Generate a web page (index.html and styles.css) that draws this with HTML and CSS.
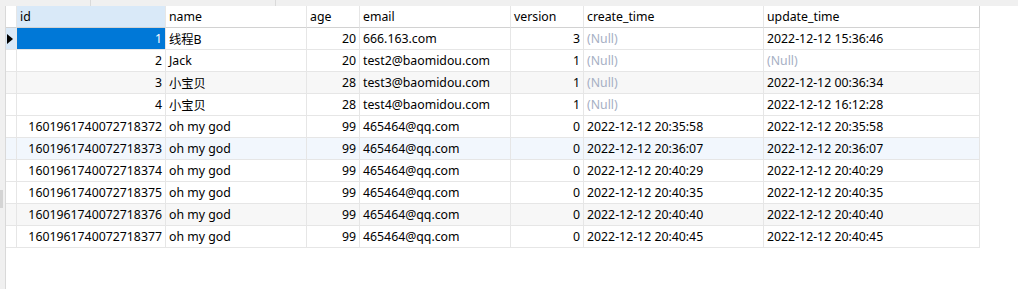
FILE: index.html
```html
<!DOCTYPE html>
<html lang="en">
  <head>
    <meta charset="UTF-8" />
    <title>user</title>
    <link rel="stylesheet" href="styles.css">
  </head>
  <body>
    <div class="toolbar">
      <div class="seg seg-a"></div>
      <div class="seg seg-b"></div>
    </div>

    <div class="main">
      <div class="gutter"><div class="grip"></div></div>

      <div class="grid">
        <div class="row head">
          <div class="c ind"></div>
          <div class="c sel-col">id</div>
          <div class="c">name</div>
          <div class="c">age</div>
          <div class="c">email</div>
          <div class="c">version</div>
          <div class="c">create_time</div>
          <div class="c">update_time</div>
        </div>

        <div class="row current">
          <div class="c ind"><span class="arrow"></span></div>
          <div class="c num selected">1</div>
          <div class="c">线程B</div>
          <div class="c num">20</div>
          <div class="c">666.163.com</div>
          <div class="c num">3</div>
          <div class="c null">(Null)</div>
          <div class="c">2022-12-12 15:36:46</div>
        </div>
        <div class="row">
          <div class="c ind"></div>
          <div class="c num">2</div>
          <div class="c">Jack</div>
          <div class="c num">20</div>
          <div class="c">test2@baomidou.com</div>
          <div class="c num">1</div>
          <div class="c null">(Null)</div>
          <div class="c null">(Null)</div>
        </div>
        <div class="row alt">
          <div class="c ind"></div>
          <div class="c num">3</div>
          <div class="c">小宝贝</div>
          <div class="c num">28</div>
          <div class="c">test3@baomidou.com</div>
          <div class="c num">1</div>
          <div class="c null">(Null)</div>
          <div class="c">2022-12-12 00:36:34</div>
        </div>
        <div class="row">
          <div class="c ind"></div>
          <div class="c num">4</div>
          <div class="c">小宝贝</div>
          <div class="c num">28</div>
          <div class="c">test4@baomidou.com</div>
          <div class="c num">1</div>
          <div class="c null">(Null)</div>
          <div class="c">2022-12-12 16:12:28</div>
        </div>
        <div class="row">
          <div class="c ind"></div>
          <div class="c num">1601961740072718372</div>
          <div class="c">oh my god</div>
          <div class="c num">99</div>
          <div class="c">465464@qq.com</div>
          <div class="c num">0</div>
          <div class="c">2022-12-12 20:35:58</div>
          <div class="c">2022-12-12 20:35:58</div>
        </div>
        <div class="row hover">
          <div class="c ind"></div>
          <div class="c num">1601961740072718373</div>
          <div class="c">oh my god</div>
          <div class="c num">99</div>
          <div class="c">465464@qq.com</div>
          <div class="c num">0</div>
          <div class="c">2022-12-12 20:36:07</div>
          <div class="c">2022-12-12 20:36:07</div>
        </div>
        <div class="row">
          <div class="c ind"></div>
          <div class="c num">1601961740072718374</div>
          <div class="c">oh my god</div>
          <div class="c num">99</div>
          <div class="c">465464@qq.com</div>
          <div class="c num">0</div>
          <div class="c">2022-12-12 20:40:29</div>
          <div class="c">2022-12-12 20:40:29</div>
        </div>
        <div class="row">
          <div class="c ind"></div>
          <div class="c num">1601961740072718375</div>
          <div class="c">oh my god</div>
          <div class="c num">99</div>
          <div class="c">465464@qq.com</div>
          <div class="c num">0</div>
          <div class="c">2022-12-12 20:40:35</div>
          <div class="c">2022-12-12 20:40:35</div>
        </div>
        <div class="row alt">
          <div class="c ind"></div>
          <div class="c num">1601961740072718376</div>
          <div class="c">oh my god</div>
          <div class="c num">99</div>
          <div class="c">465464@qq.com</div>
          <div class="c num">0</div>
          <div class="c">2022-12-12 20:40:40</div>
          <div class="c">2022-12-12 20:40:40</div>
        </div>
        <div class="row">
          <div class="c ind"></div>
          <div class="c num">1601961740072718377</div>
          <div class="c">oh my god</div>
          <div class="c num">99</div>
          <div class="c">465464@qq.com</div>
          <div class="c num">0</div>
          <div class="c">2022-12-12 20:40:45</div>
          <div class="c">2022-12-12 20:40:45</div>
        </div>
      </div>
    </div>
  </body>
</html>
```

FILE: styles.css
```css
:root {
  --line: #e6e6e6;
  --head-line: #d2d2d2;
  --select: #0078d7;
  --select-col: #d9e9f8;
  --text: #000;
  --null: #a6afc4;
}

* {
  margin: 0;
  padding: 0;
  box-sizing: border-box;
}

body {
  font-family: "Noto Sans", "Noto Sans CJK SC", sans-serif;
  font-size: 12.3px;
  color: var(--text);
  background-color: #fff;
  height: 289px;
  overflow: hidden;
}

.toolbar {
  height: 6px;
  background-color: #f0f0f0;
  display: flex;
}

.seg {
  border-right: 1px solid #dadada;
}

.seg-a {
  width: 91px;
}

.seg-b {
  width: 185px;
}

.main {
  display: flex;
  height: 283px;
}

.gutter {
  width: 6px;
  background-color: #f0f0f0;
  border-right: 1px solid #d9d9d9;
}

.grip {
  margin-top: 184px;
  width: 3px;
  height: 18px;
  background-color: #d4d4d4;
}

.grid {
  display: grid;
  grid-template-columns: 11px 149px 141px 53px 151px 73px 180px 216px;
  grid-auto-rows: 22px;
  align-self: flex-start;
}

.row {
  display: contents;
}

.c {
  display: flex;
  align-items: center;
  padding: 0 3px;
  white-space: nowrap;
  overflow: hidden;
  border-right: 1px solid var(--line);
  border-bottom: 1px solid var(--line);
  background-color: #fff;
}

.num {
  justify-content: flex-end;
}

.null {
  color: var(--null);
}

.head .c {
  border-bottom-color: var(--head-line);
}

.head .c:last-child {
  border-right-color: var(--head-line);
}

.head .sel-col {
  background-color: var(--select-col);
}

.alt .c {
  background-color: #f7f7f7;
}

.hover .c {
  background-color: #f2f7fd;
}

.current .ind {
  background-color: var(--select-col);
}

.c.ind {
  padding: 0;
}

.arrow {
  margin-left: 1px;
  width: 0;
  height: 0;
  border-top: 5px solid transparent;
  border-bottom: 5px solid transparent;
  border-left: 6px solid #000;
}

.c.selected {
  background-color: var(--select);
  color: #fff;
}
```
